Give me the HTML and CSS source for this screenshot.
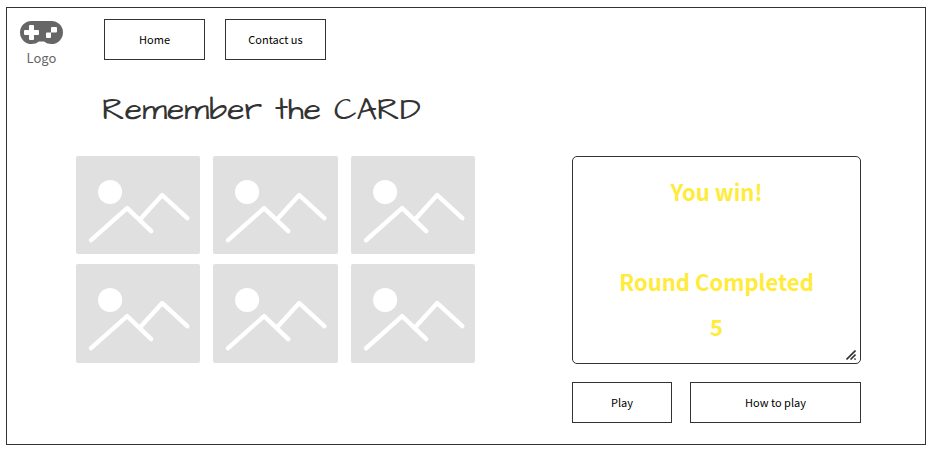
FILE: index.html
```html
<!DOCTYPE html>
<html lang="en">
<head>
  <meta charset="utf-8">
  <meta name="viewport" content="width=device-width, initial-scale=1">
  <title>Remember the CARD</title>
  <link rel="stylesheet" href="styles.css">
</head>
<body>
  <svg class="defs" width="0" height="0" aria-hidden="true">
    <symbol id="picture" viewBox="0 0 124 98">
      <circle cx="34" cy="36" r="12" fill="#fff"/>
      <path d="M15 84 51 52 75 75M64 63 86 39 111 62" fill="none" stroke="#fff" stroke-width="4.4" stroke-linecap="round" stroke-linejoin="round"/>
    </symbol>
  </svg>
  <div class="frame">
    <header class="header">
      <a class="logo" href="#">
        <svg class="logo-icon" viewBox="0 0 43 23" aria-hidden="true">
          <path fill="#666" fill-rule="evenodd" d="M11.500 0H31.500A11.500 11.500 0 0 1 31.500 23Q27 23 24 20.500H19Q16 23 11.500 23A11.500 11.500 0 0 1 11.500 0ZM10 4Q9 4 9 5V9H5Q4 9 4 10V13Q4 14 5 14H9V18Q9 19 10 19H13Q14 19 14 18V14H18Q19 14 19 13V10Q19 9 18 9H14V5Q14 4 13 4ZM32 6Q31 6 31 7V11.500H36Q37 11.500 37 10.500V7Q37 6 36 6ZM27 11.500Q26 11.500 26 12.500V16Q26 17 27 17H30Q31 17 31 16V11.500Z"/>
        </svg>
        <span>Logo</span>
      </a>
      <nav class="nav">
        <button class="button" type="button">Home</button>
        <button class="button" type="button">Contact us</button>
      </nav>
    </header>
    <main class="main">
      <h1 class="title">Remember the CARD</h1>
      <div class="game">
        <div class="cards">
          <svg class="card" viewBox="0 0 124 98"><use href="#picture"/></svg>
          <svg class="card" viewBox="0 0 124 98"><use href="#picture"/></svg>
          <svg class="card" viewBox="0 0 124 98"><use href="#picture"/></svg>
          <svg class="card" viewBox="0 0 124 98"><use href="#picture"/></svg>
          <svg class="card" viewBox="0 0 124 98"><use href="#picture"/></svg>
          <svg class="card" viewBox="0 0 124 98"><use href="#picture"/></svg>
        </div>
        <div class="side">
          <div class="result">
            <textarea class="result-text" aria-label="Result" rows="4" readonly>You win!

Round Completed
5</textarea>
            <svg class="grip" viewBox="0 0 10 10" aria-hidden="true">
              <path d="M.5 9.500 9.500 .5M4.500 9.500 9.500 4.500M8.500 9.500 9.500 8.500" fill="none" stroke="#333" stroke-width="1.600"/>
            </svg>
          </div>
          <div class="actions">
            <button class="button" type="button">Play</button>
            <button class="button" type="button">How to play</button>
          </div>
        </div>
      </div>
    </main>
  </div>
</body>
</html>
```
FILE: styles.css
```css
* {
  box-sizing: border-box;
}

body {
  margin: 0;
  padding: 7px 6px;
  background: #fff;
  color: #000;
  font-family: "Noto Sans CJK SC", sans-serif;
  font-size: 11px;
}

.defs {
  position: absolute;
}

.frame {
  border: 1px solid #333;
  padding-bottom: 21px;
}

.header {
  display: flex;
  align-items: flex-start;
  gap: 41px;
  padding: 11px 13px 0;
}

.logo {
  display: flex;
  flex-direction: column;
  align-items: center;
  width: 43px;
  padding-top: 2px;
  color: #666;
  font-size: 13px;
  font-weight: 400;
  line-height: 28px;
  text-decoration: none;
}

.logo-icon {
  width: 43px;
  height: 23px;
}

.nav {
  display: flex;
  gap: 20px;
}

.nav .button {
  width: 101px;
}

.button {
  height: 41px;
  padding: 0 0 2px;
  border: 1px solid #333;
  background: #fff;
  color: #000;
  font: inherit;
}

.main {
  padding: 0 64px 0 69px;
}

.title {
  margin: 22px 0 30px 26px;
  color: #333;
  font-family: "Architects Daughter", "DejaVu Sans", sans-serif;
  font-size: 32px;
  font-weight: 400;
  line-height: 32px;
}

.game {
  display: grid;
  grid-template-columns: 399fr 289fr;
  align-items: start;
  gap: 97px;
}

.cards {
  display: grid;
  grid-template-columns: repeat(3, 1fr);
  gap: 10px 13px;
}

.card {
  display: block;
  width: 100%;
  border-radius: 2px;
  background: #e0e0e0;
}

.result {
  position: relative;
}

.result-text {
  display: block;
  width: 100%;
  height: 208px;
  padding: 12px 8px;
  overflow: hidden;
  resize: none;
  border: 1px solid #333;
  border-radius: 5px;
  background: #fff;
  color: #ffeb3b;
  font: bold 22px/45px "Noto Sans CJK SC", sans-serif;
  text-align: center;
}

.grip {
  position: absolute;
  right: 5px;
  bottom: 4px;
  width: 10px;
  height: 10px;
}

.actions {
  display: grid;
  grid-template-columns: 100fr 171fr;
  gap: 18px;
  margin-top: 18px;
}
```
